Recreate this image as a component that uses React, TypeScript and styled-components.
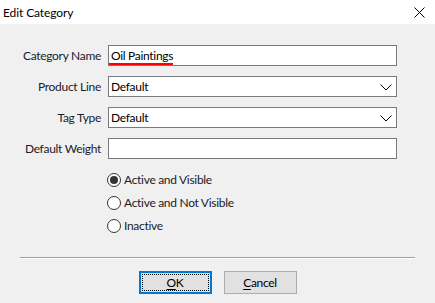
import { Fragment } from 'react'
import styled, { createGlobalStyle } from 'styled-components'

const GlobalStyle = createGlobalStyle`
  html, body {
    margin: 0;
    padding: 0;
    background: #f0f0f0;
  }
  body {
    font-family: Lato, 'Noto Sans', sans-serif;
    font-size: 12px;
    letter-spacing: -0.3px;
    color: #000;
  }
`

const Window = styled.div`
  width: 435px;
  height: 303px;
  display: flex;
  flex-direction: column;
  background: #f0f0f0;
  overflow: hidden;
`

const TitleBar = styled.div`
  height: 24px;
  background: #fff;
  display: flex;
  align-items: center;
  justify-content: space-between;
  padding: 0 10px 0 3px;
  font-size: 12px;
  letter-spacing: -0.1px;
`

const CloseButton = styled.div`
  width: 11px;
  height: 11px;
  display: flex;
`

const Form = styled.div`
  display: grid;
  grid-template-columns: 101px 289px;
  grid-auto-rows: 21px;
  column-gap: 7px;
  row-gap: 10px;
  margin-top: 21px;
`

const Label = styled.label`
  display: flex;
  align-items: center;
  justify-content: flex-end;
  white-space: nowrap;
  color: #1b1b2a;
`

const Field = styled.div`
  position: relative;
  box-sizing: border-box;
  height: 21px;
  background: #fff;
  border: 1px solid #7a7a7a;
  display: flex;
  align-items: center;
  padding: 0 20px 0 2px;
  color: #000;
`

const Squiggle = styled.span`
  position: absolute;
  left: 0;
  top: 17px;
  width: 64px;
  height: 2px;
  background: #ff0000;
`

const Chevron = styled.svg`
  position: absolute;
  right: 4px;
  top: 7px;
`

const RadioGroup = styled.div`
  display: flex;
  flex-direction: column;
  margin: 9px 0 0 107px;
`

const RadioRow = styled.div`
  height: 23px;
  display: flex;
  align-items: center;
  gap: 3px;
  color: #1b1b2a;
`

const RadioCircle = styled.span<{ $checked?: boolean }>`
  box-sizing: border-box;
  width: 14px;
  height: 14px;
  border-radius: 50%;
  border: 1px solid #333;
  background: #fff;
  display: flex;
  align-items: center;
  justify-content: center;

  &::after {
    content: '';
    width: 8px;
    height: 8px;
    border-radius: 50%;
    background: ${(p) => (p.$checked ? '#333' : 'transparent')};
  }
`

const Separator = styled.div`
  margin: 20px 20px 0;
  height: 1px;
  background: #a0a0a0;
  border-bottom: 1px solid #fff;
`

const ButtonRow = styled.div`
  display: flex;
  justify-content: center;
  gap: 12px;
  margin-top: 12px;
`

const Button = styled.button<{ $default?: boolean }>`
  box-sizing: border-box;
  width: 73px;
  height: 23px;
  padding: 0;
  font: inherit;
  letter-spacing: inherit;
  color: #000;
  background: #e1e1e1;
  border: ${(p) => (p.$default ? '2px solid #0078d7' : '1px solid #adadad')};
  outline: ${(p) => (p.$default ? '1px dotted #000' : 'none')};
  outline-offset: -4px;
  display: flex;
  align-items: center;
  justify-content: center;

  u {
    text-decoration: underline;
    text-underline-offset: 2px;
  }
`

const fields = [
  { label: 'Category Name', value: 'Oil Paintings', squiggle: true },
  { label: 'Product Line', value: 'Default', select: true },
  { label: 'Tag Type', value: 'Default', select: true },
  { label: 'Default Weight', value: '' },
]

const radios = [
  { label: 'Active and Visible', checked: true },
  { label: 'Active and Not Visible' },
  { label: 'Inactive' },
]

const App = () => {
  return (
    <Window>
      <GlobalStyle />
      <TitleBar>
        <span>Edit Category</span>
        <CloseButton>
          <svg width="11" height="11" viewBox="0 0 11 11">
            <path d="M0.5 0.5 L10.5 10.5 M10.5 0.5 L0.5 10.5" stroke="#000" strokeWidth="1" />
          </svg>
        </CloseButton>
      </TitleBar>
      <Form>
        {fields.map((f) => (
          <Fragment key={f.label}>
            <Label>{f.label}</Label>
            <Field>
              {f.value}
              {f.squiggle && <Squiggle />}
              {f.select && (
                <Chevron width="12" height="7" viewBox="0 0 12 7">
                  <path d="M0.5 0.5 L6 6 L11.5 0.5" stroke="#000" strokeWidth="1" fill="none" />
                </Chevron>
              )}
            </Field>
          </Fragment>
        ))}
      </Form>
      <RadioGroup>
        {radios.map((r) => (
          <RadioRow key={r.label}>
            <RadioCircle $checked={r.checked} />
            {r.label}
          </RadioRow>
        ))}
      </RadioGroup>
      <Separator />
      <ButtonRow>
        <Button $default>
          <u>O</u>K
        </Button>
        <Button>
          <u>C</u>ancel
        </Button>
      </ButtonRow>
    </Window>
  )
}

export default App
